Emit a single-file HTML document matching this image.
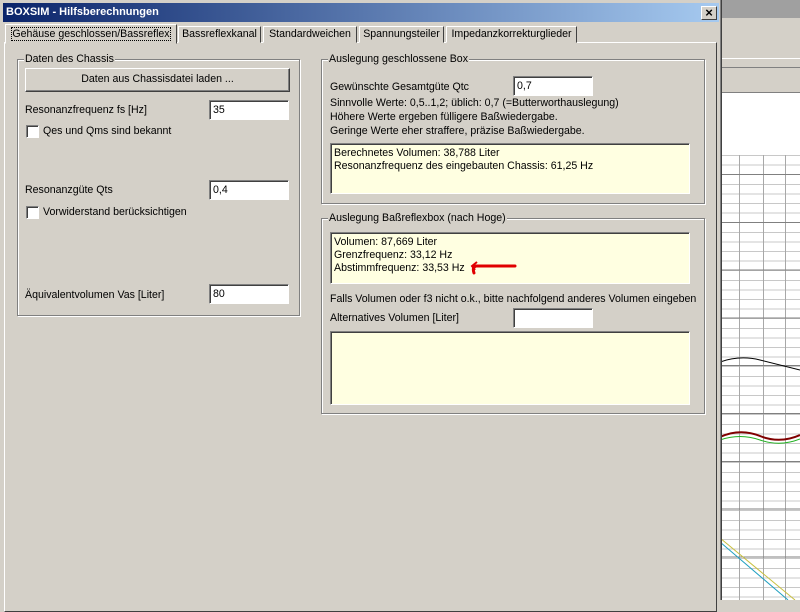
<!DOCTYPE html>
<html><head><meta charset="utf-8"><style>
*{margin:0;padding:0;box-sizing:border-box}
body{width:800px;height:600px;overflow:hidden;position:relative;background:#d4d0c8;font-family:"Liberation Sans",sans-serif;font-size:10.6px;color:#000}
.a{position:absolute}
.t{position:absolute;white-space:nowrap;line-height:13px}
.grp{position:absolute;border:1px solid #808080;box-shadow:1px 1px 0 #fff, inset 1px 1px 0 #fff}
.lg{position:absolute;top:-7px;left:6px;background:#d4d0c8;padding:0 1px;line-height:13px;white-space:nowrap}
.inp{position:absolute;background:#fff;border:1px solid;border-color:#808080 #fff #fff #808080;box-shadow:inset 1px 1px 0 #404040;padding:2px 3px;line-height:14px}
.memo{position:absolute;background:#ffffe1;border:1px solid;border-color:#808080 #fff #fff #808080;box-shadow:inset 1px 1px 0 #404040;padding:3px 3px;line-height:13px}
.cb{position:absolute;width:13px;height:13px;background:#fff;border:1px solid;border-color:#808080 #fff #fff #808080;box-shadow:inset 1px 1px 0 #404040}
.tab{position:absolute;top:26px;height:17px;border:1px solid;border-color:#fff #404040 #d4d0c8 #fff;line-height:14px;text-align:center;white-space:nowrap;background:#d4d0c8}
</style></head><body>
<!-- background app -->
<div class="a" style="left:720px;top:0;width:80px;height:18px;background:#a0a0a0"></div>
<div class="a" style="left:720px;top:58px;width:80px;height:1px;background:#fff"></div>
<div class="a" style="left:720px;top:67px;width:80px;height:1px;background:#808080"></div>
<div class="a" style="left:720px;top:92px;width:80px;height:1px;background:#808080"></div>
<div class="a" style="left:720px;top:93px;width:80px;height:507px;background:#fff"></div>
<div class="a" style="left:720px;top:155px;width:80px;height:445px;background:
linear-gradient(90deg,transparent 0 19px,#a8a8a8 19px 20px,transparent 20px 43px,#a8a8a8 43px 44px,transparent 44px 65px,#a8a8a8 65px 66px,transparent 66px),
repeating-linear-gradient(180deg,#c8c8c8 0 1px,transparent 1px 9.6px);"></div>
<div class="a" style="left:720px;top:174px;width:80px;height:426px;background:repeating-linear-gradient(180deg,#808080 0 1px,transparent 1px 47.8px)"></div>
<svg class="a" style="left:720px;top:300px" width="80" height="300">
<path d="M0 62 Q20 55 40 60 T80 70" stroke="#000" fill="none"/>
<path d="M0 137 Q20 128 40 136 T80 135" stroke="#800000" stroke-width="2" fill="none"/>
<path d="M0 140 Q20 133 40 140 T80 139" stroke="#20b020" fill="none"/>
<path d="M0 238 L75 300" stroke="#c8c040" fill="none"/>
<path d="M0 242 L68 300" stroke="#20a0c0" fill="none"/>
</svg>
<!-- dialog -->
<div class="a" style="left:0;top:0;width:722px;height:600px;background:#d4d0c8;border-right:1px solid #404040;box-shadow:inset -1px 0 0 #808080"></div>
<div class="a" style="left:3px;top:3px;width:716px;height:19px;background:linear-gradient(90deg,#0a246a,#a6caf0)"></div>
<div class="t" style="left:6px;top:6px;color:#fff;font-weight:bold;font-size:11px">BOXSIM - Hilfsberechnungen</div>
<div class="a" style="left:701px;top:6px;width:16px;height:14px;background:#d4d0c8;border:1px solid;border-color:#fff #404040 #404040 #fff;text-align:center;line-height:11px;font-size:13px;font-weight:bold">×</div>
<!-- tab panel -->
<div class="a" style="left:4px;top:42px;width:713px;height:570px;border:1px solid;border-color:#fff #404040 #404040 #fff"></div>
<div class="tab" style="left:5px;top:24px;width:172px;height:20px;padding-top:2px;z-index:2"><span style="outline:1px dotted #000">Gehäuse geschlossen/Bassreflex</span></div>
<div class="tab" style="left:178px;width:83px">Bassreflexkanal</div>
<div class="tab" style="left:263px;width:94px">Standardweichen</div>
<div class="tab" style="left:359px;width:85px">Spannungsteiler</div>
<div class="tab" style="left:446px;width:131px">Impedanzkorrekturglieder</div>
<!-- left group -->
<div class="grp" style="left:17px;top:59px;width:283px;height:257px"><div class="lg">Daten des Chassis</div></div>
<div class="a" style="left:25px;top:68px;width:265px;height:24px;border:1px solid;border-color:#fff #404040 #404040 #fff;box-shadow:inset -1px -1px 0 #808080;text-align:center;line-height:21px">Daten aus Chassisdatei laden ...</div>
<div class="t" style="left:25px;top:104px">Resonanzfrequenz fs [Hz]</div>
<div class="inp" style="left:209px;top:100px;width:80px;height:20px">35</div>
<div class="cb" style="left:26px;top:125px"></div>
<div class="t" style="left:43px;top:125px">Qes und Qms sind bekannt</div>
<div class="t" style="left:25px;top:184px">Resonanzgüte Qts</div>
<div class="inp" style="left:209px;top:180px;width:80px;height:20px">0,4</div>
<div class="cb" style="left:26px;top:206px"></div>
<div class="t" style="left:43px;top:206px">Vorwiderstand berücksichtigen</div>
<div class="t" style="left:25px;top:289px">Äquivalentvolumen Vas [Liter]</div>
<div class="inp" style="left:209px;top:284px;width:80px;height:20px">80</div>
<!-- right group 1 -->
<div class="grp" style="left:321px;top:59px;width:384px;height:145px"><div class="lg">Auslegung geschlossene Box</div></div>
<div class="t" style="left:330px;top:81px">Gewünschte Gesamtgüte Qtc</div>
<div class="inp" style="left:513px;top:76px;width:80px;height:20px">0,7</div>
<div class="t" style="left:330px;top:97px">Sinnvolle Werte: 0,5..1,2; üblich: 0,7 (=Butterworthauslegung)</div>
<div class="t" style="left:330px;top:111px">Höhere Werte ergeben fülligere Baßwiedergabe.</div>
<div class="t" style="left:330px;top:125px">Geringe Werte eher straffere, präzise Baßwiedergabe.</div>
<div class="memo" style="left:330px;top:143px;width:360px;height:51px">Berechnetes Volumen: 38,788 Liter<br>Resonanzfrequenz des eingebauten Chassis: 61,25 Hz</div>
<!-- right group 2 -->
<div class="grp" style="left:321px;top:218px;width:384px;height:196px"><div class="lg">Auslegung Baßreflexbox (nach Hoge)</div></div>
<div class="memo" style="left:330px;top:232px;width:360px;height:52px">Volumen: 87,669 Liter<br>Grenzfrequenz: 33,12 Hz<br>Abstimmfrequenz: 33,53 Hz</div>
<svg class="a" style="left:468px;top:258px" width="50" height="20"><path d="M47 8 L8 8 Q4 9 6 15" stroke="#e00000" stroke-width="3" fill="none" stroke-linecap="round"/><path d="M9 4 L4 8 L7 12" stroke="#e00000" stroke-width="2" fill="none"/></svg>
<div class="t" style="left:330px;top:293px">Falls Volumen oder f3 nicht o.k., bitte nachfolgend anderes Volumen eingeben</div>
<div class="t" style="left:330px;top:312px">Alternatives Volumen [Liter]</div>
<div class="inp" style="left:513px;top:308px;width:80px;height:20px"></div>
<div class="memo" style="left:330px;top:331px;width:360px;height:74px"></div>
</body></html>
